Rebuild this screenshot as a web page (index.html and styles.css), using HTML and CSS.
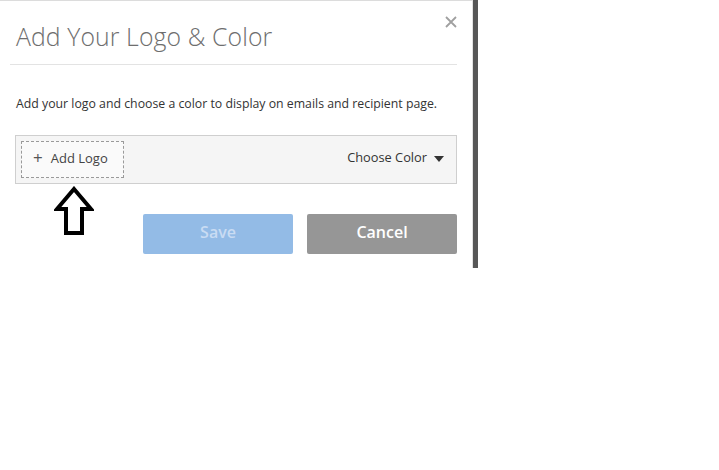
FILE: index.html
```html
<!DOCTYPE html>
<html lang="en">
<head>
    <meta charset="UTF-8">
    <title>Add Your Logo &amp; Color</title>
    <link rel="stylesheet" href="styles.css">
</head>
<body>
    <div class="stage">
        <div class="dialog">
            <div class="dialog-header">
                <h1 class="dialog-title">Add Your Logo &amp; Color</h1>
                <button type="button" class="close-btn" aria-label="Close">
                    <svg width="12" height="12" viewBox="0 0 12 12"><path d="M1 1L11 11M11 1L1 11" stroke="#a0a0a0" stroke-width="1.8"/></svg>
                </button>
            </div>

            <p class="dialog-text">Add your logo and choose a color to display on emails and recipient page.</p>

            <div class="brand-bar">
                <button type="button" class="add-logo">
                    <span class="plus">+</span>
                    Add Logo
                </button>
                <button type="button" class="choose-color">
                    Choose Color
                    <svg width="10" height="6" viewBox="0 0 10 6"><path d="M0 0H10L5 6Z" fill="#333"/></svg>
                </button>
            </div>

            <div class="hint-row">
                <svg class="hint-arrow" width="40" height="50" viewBox="0 0 40 50">
                    <path d="M20 3L37 23H28V47H12V23H3Z" fill="#fff" stroke="#000" stroke-width="4" stroke-linejoin="miter"/>
                </svg>
            </div>

            <div class="dialog-actions">
                <button type="button" class="btn btn-save" disabled>Save</button>
                <button type="button" class="btn btn-cancel">Cancel</button>
            </div>
        </div>
        <div class="backdrop-edge"></div>
    </div>
</body>
</html>
```

FILE: styles.css
```css
* {
    margin: 0;
    padding: 0;
    box-sizing: border-box;
    font-family: 'Open Sans', 'Liberation Sans', sans-serif;
}

body {
    background: #fff;
}

.stage {
    display: flex;
    width: 478px;
    height: 268px;
}

.dialog {
    width: 473px;
    height: 268px;
    background: #fff;
    border-top: 1px solid #dcdcdc;
    border-right: 1px solid #e2e2e2;
    padding: 0 15px 0 10px;
}

.backdrop-edge {
    width: 5px;
    background: #575757;
}

.dialog-header {
    display: flex;
    justify-content: space-between;
    align-items: flex-start;
    border-bottom: 1px solid #e3e3e3;
    height: 64px;
}

.dialog-title {
    font-size: 24.8px;
    font-weight: 300;
    color: #6e6e6e;
    margin: 18px 0 0 6px;
    letter-spacing: 0.1px;
}

.close-btn {
    border: none;
    background: none;
    margin-top: 13px;
    cursor: pointer;
}

.dialog-text {
    font-size: 12.3px;
    color: #333;
    margin: 30px 0 0 6px;
}

.brand-bar {
    display: flex;
    justify-content: space-between;
    align-items: center;
    margin: 23px 0 0 5px;
    height: 49px;
    background: #f5f5f5;
    border: 1px solid #cfcfcf;
    padding: 0 12px 0 5px;
}

.add-logo {
    display: flex;
    align-items: center;
    gap: 8px;
    width: 103px;
    height: 37px;
    padding: 0 0 4px 11px;
    border: 1px dashed #9a9a9a;
    background: #fafafa;
    color: #444;
    font-size: 13px;
    cursor: pointer;
}

.plus {
    font-size: 17px;
    line-height: 1;
    color: #555;
}

.choose-color {
    display: flex;
    align-items: center;
    gap: 7px;
    border: none;
    background: none;
    font-size: 12.8px;
    color: #333;
    cursor: pointer;
    margin-bottom: 5px;
}

.choose-color svg {
    margin-top: 4px;
}

.hint-row {
    height: 30px;
    position: relative;
}

.hint-arrow {
    position: absolute;
    left: 44px;
    top: 2px;
}

.dialog-actions {
    display: flex;
    justify-content: flex-end;
    gap: 14px;
}

.btn {
    width: 150px;
    height: 40px;
    padding-bottom: 4px;
    border: none;
    border-radius: 2px;
    font-size: 16px;
    font-weight: 600;
    cursor: pointer;
}

.btn-save {
    background: #93bbe6;
    color: #c9dcf3;
}

.btn-cancel {
    background: #969696;
    color: #fff;
}
```
